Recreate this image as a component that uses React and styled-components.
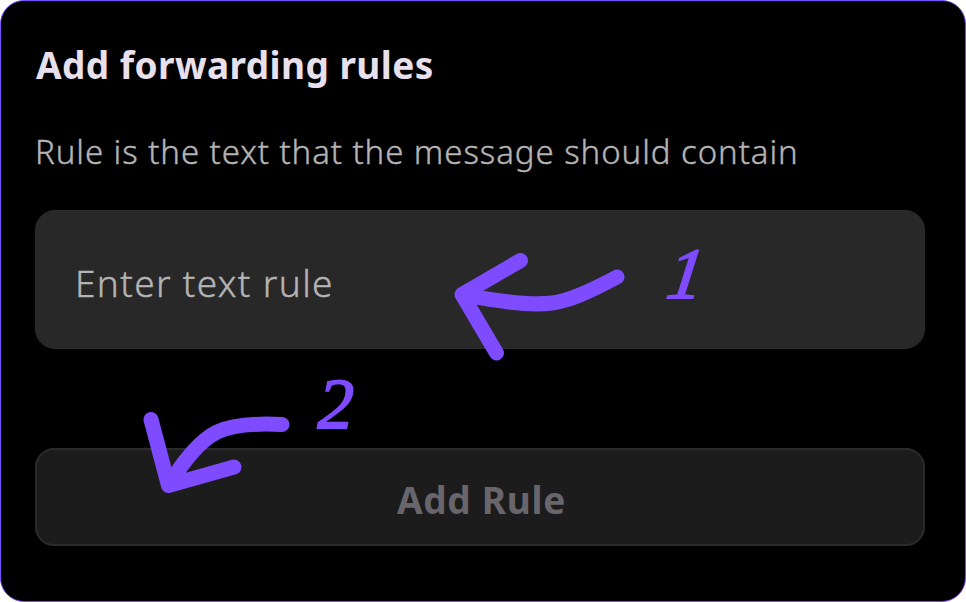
import React from 'react';
import styled, { createGlobalStyle } from 'styled-components';

const GlobalStyle = createGlobalStyle`
  *, *::before, *::after { box-sizing: border-box; }
  body { margin: 0; background: #fff; }
`;

const Card = styled.main`
  position: relative;
  display: flex;
  flex-direction: column;
  width: 966px;
  height: 602px;
  padding: 40px 40px 0 34px;
  overflow: hidden;
  background: #000;
  border: 1px solid #7c4dff;
  border-radius: 24px;
  font-family: 'Noto Sans', 'Open Sans', sans-serif;
`;

const Title = styled.h1`
  margin: 0 0 0 1px;
  font-size: 37px;
  line-height: 48px;
  font-weight: 700;
  letter-spacing: 0.42px;
  white-space: nowrap;
  color: #e8e0ec;
`;

const Description = styled.p`
  margin: 40px 0 0;
  font-size: 33px;
  line-height: 46px;
  font-weight: 300;
  letter-spacing: 0.93px;
  white-space: nowrap;
  color: #b4b4b4;
  -webkit-text-stroke: 0.4px #b4b4b4;
`;

const RuleInput = styled.input`
  width: 890px;
  height: 139px;
  margin: 35px 0 0;
  padding: 5px 39px 0;
  border: 1px solid #2c2c2c;
  border-radius: 20px;
  outline: none;
  background: #282828;
  color: #b4b4b4;
  font: 300 37px 'Noto Sans', 'Open Sans', sans-serif;
  letter-spacing: 1.36px;
  -webkit-text-stroke: 0.4px #b4b4b4;
  &::placeholder { color: #b4b4b4; opacity: 1; }
`;

const AddButton = styled.button`
  width: 890px;
  height: 98px;
  margin: 99px 0 0;
  padding: 4px 0 0 3px;
  border: 2px solid #2b2b2b;
  border-radius: 19px;
  background: #1c1c1c;
  color: #68666c;
  font: 700 37px 'Noto Sans', 'Open Sans', sans-serif;
  letter-spacing: 0.7px;
`;

const Annotations = styled.svg`
  position: absolute;
  inset: -1px;
  width: 966px;
  height: 602px;
  pointer-events: none;
  fill: none;
  stroke: #7f4bff;
  stroke-width: 15;
  stroke-linecap: round;
  stroke-linejoin: round;
`;

const StepNumber = styled.span`
  position: absolute;
  left: ${({ $x }) => $x}px;
  top: ${({ $y }) => $y}px;
  font: italic 400 72px/70px 'Liberation Serif', serif;
  color: #7f4bff;
  -webkit-text-stroke: 1.8px #7f4bff;
  transform: skewX(${({ $slant }) => $slant}deg);
  pointer-events: none;
`;

export default function App() {
  return (
    <>
      <GlobalStyle />
      <Card>
        <Title>Add forwarding rules</Title>
        <Description>Rule is the text that the message should contain</Description>
        <RuleInput placeholder="Enter text rule" />
        <AddButton type="button">Add Rule</AddButton>
        <Annotations viewBox="0 0 966 602" aria-hidden="true">
          <path d="M520.5 260.5 462 294.5 496.5 353M617 277C589 292 569 301 552 303C528 306 496 301 462 294.5" />
          <path d="M151 419.5 168.5 485.5 234 467M282 424.5C252 423 230 426 217 432C201 440 184 460 168.5 485.5" />
        </Annotations>
        <StepNumber $x={667} $y={238} $slant={-8}>1</StepNumber>
        <StepNumber $x={317} $y={368} $slant={-1}>2</StepNumber>
      </Card>
    </>
  );
}
